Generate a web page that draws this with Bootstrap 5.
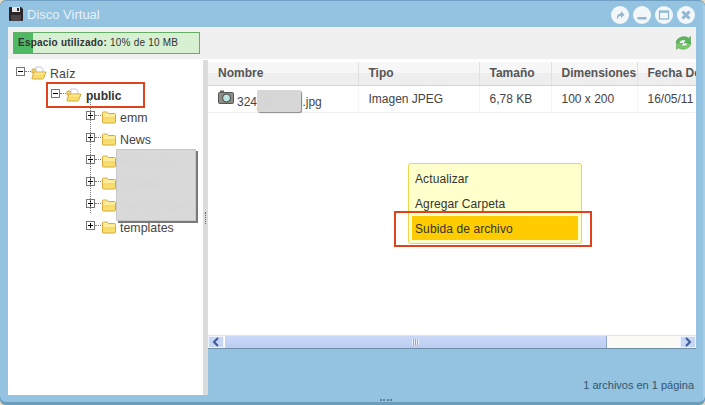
<!DOCTYPE html>
<html lang="es">
<head>
<meta charset="utf-8">
<title>Disco Virtual</title>
<link rel="stylesheet" href="https://cdn.jsdelivr.net/npm/bootstrap@5.3.0/dist/css/bootstrap.min.css">
<style>
html,body{margin:0;width:705px;height:405px;overflow:hidden;background:#e3dccb}
body{font-family:"Liberation Sans",Arial,sans-serif;font-size:12px;color:#444;line-height:1}
.win-frame{position:relative;width:705px;height:405px;background:#93c3e1;border-radius:6px;box-shadow:inset 0 1px 0 #6f9fc2,inset 0 -3px 0 #6b9dbd,inset -2px 0 0 #a9cfe6}
.title-bar{height:27px;padding:0 8px}
.title-text{color:#e6f1f9;font-size:13px;margin-left:3px;margin-top:1px}
.win-btn{width:18px;height:18px;background:#f4f7f9;border-radius:50%;display:block}
.win-btns{margin-right:2px;margin-top:2px;gap:4px}
.tool-bar{height:33px;margin:0 9px 0 8px;background:#f0f0f0;border-bottom:1px solid #fff;padding:0 4px 0 5px}
.quota{width:187px;height:22px;background:#d7f0d1;border:1px solid #63ad67;border-radius:0;font-size:10px;position:relative;margin-top:-1px}
.quota .progress-bar{background:#4fb862;width:19px}
.quota-label{position:absolute;left:4px;top:5px;color:#333;letter-spacing:.22px;white-space:nowrap}
.main-row{height:335px;margin:0 9px 0 8px}
.tree-pane{width:195px;background:#fff;padding-top:3px;position:relative}
.tree-list{list-style:none;margin:0;padding:0}
.tree-row{height:22px;font-size:12.4px;color:#444;white-space:nowrap}
.lvl-0{padding-left:8px}.lvl-1{padding-left:43px}.lvl-2{padding-left:78px}
.tree-box{width:9px;height:9px;flex:none;margin-top:-6px}
.tree-dash{width:6px;height:0;border-top:1px dotted #777;flex:none;margin-top:-6px}
.tree-ico{width:16px;height:14px;flex:none;margin-top:-3px}
.tree-name{margin-left:3px;margin-top:1px}
.is-strong{font-weight:700;font-size:12px;color:#333;margin-left:4px;margin-top:-1px}
.kid-list{position:relative}
.kid-list::before{content:"";position:absolute;left:82px;top:-8px;height:114px;border-left:1px dotted #777}
.split-bar{width:5px;background:#dcdcdc;position:relative}
.split-dots{position:absolute;left:2px;top:152px;width:1px;height:12px;border-left:1px dotted #667}
.right-col{min-width:0;width:488px}
.grid-zone{height:275px;background:#fff;overflow:hidden;padding-top:2px}
.grid-table{table-layout:fixed;width:508px;margin:0;border-collapse:collapse;--bs-table-bg:transparent}
.col-a{width:150px}.col-b{width:121px}.col-c{width:72px}.col-d{width:86px}.col-e{width:79px}
.grid-table th{height:23px;padding:0 0 0 10px;background:linear-gradient(#f7f7f7 50%,#eeeeee 50%);border-bottom:1px solid #d4d4d4;border-right:1px solid #e0e0e0;font-size:12px;color:#555;vertical-align:middle;white-space:nowrap;overflow:hidden}
.grid-table td{height:27px;padding:1px 0 0 10px;border-bottom:1px solid #f1f1f1;border-right:1px solid #f6f6f6;font-size:12px;color:#444;vertical-align:middle;white-space:nowrap;overflow:visible}
.cam-ico{width:16px;height:14px;vertical-align:2px;margin-right:3px}
.h-scroll{height:14px;background:#fbfaf4;border-bottom:1px solid #6f8fa8;border-top:1px solid #dfe3ea}
.sc-btn{width:16px;background:#c7d6f5;flex:none;box-shadow:inset 0 0 0 1px #eef3fd}
.sc-thumb{width:383px;background:linear-gradient(#cad8f8,#bccdf2);border-right:1px solid #8ea4c9;box-shadow:inset 1px 0 0 #fff}
.grip-lines{width:7px;height:6px;background:repeating-linear-gradient(90deg,#eef3ff 0 1px,#93a6ca 1px 2px)}
.foot-bar{height:46px;padding:0 2px 4px 0;color:#33556e;font-size:11px}
.bottom-grip{width:12px;height:0;border-top:2px dotted #5f7f97;position:absolute;left:380px;top:399px}
.corner-grip{position:absolute;left:697px;top:395px;width:5px;height:5px;background:radial-gradient(#5e86a5 35%,transparent 40%) 0 0/2px 2px}
.mark-box{position:absolute;border:2px solid #e0431c;pointer-events:none}
.mark-tree{left:46px;top:82px;width:99px;height:26px}
.mark-menu{left:394px;top:211px;width:198px;height:36px}
.mask-a{position:absolute;left:116px;top:149px;width:80px;height:72px;background:#d9d9d9;opacity:.985;box-shadow:2px 2px 0 #777;border:1px solid #c8c8c8}
.mask-b{position:absolute;left:257px;top:90px;width:44px;height:22px;background:#d7d7d7;opacity:.98;box-shadow:1px 1px 1px #888;border-radius:2px}
.ctx-menu{position:absolute;left:408px;top:163px;width:174px;height:81px;background:#ffffcb;border:1px solid #f0d34f;border-radius:3px;padding:3px}
.ctx-menu .list-group-item{background:transparent;border:0;padding:0 0 0 3px;height:24px;line-height:24px;font-size:12px;letter-spacing:.1px;color:#333;border-radius:0;margin-bottom:1px}
.ctx-menu .list-group-item.active{background:#ffcc00;color:#333;line-height:26px}
</style>
</head>
<body>
<svg width="0" height="0" class="position-absolute">
<defs>
<linearGradient id="fg" x1="0" y1="0" x2="0" y2="1"><stop offset="0" stop-color="#fff6b0"/><stop offset=".5" stop-color="#f8da62"/><stop offset="1" stop-color="#f6e27c"/></linearGradient>
<symbol id="plus-box" viewBox="0 0 9 9"><rect x=".5" y=".5" width="8" height="8" fill="#fff" stroke="#777"/><path d="M2 4.5h5M4.5 2v5" stroke="#000"/></symbol>
<symbol id="minus-box" viewBox="0 0 9 9"><rect x=".5" y=".5" width="8" height="8" fill="#fff" stroke="#777"/><path d="M2 4.5h5" stroke="#000"/></symbol>
<symbol id="f-closed" viewBox="0 0 16 14"><path d="M1.500 4V3q0-1 1-1h3.500l1.500 1.500h6q1 0 1 1V12q0 1-1 1h-11q-1 0-1-1z" fill="url(#fg)" stroke="#d8a93a"/><path d="M2 6h12" stroke="#fff9cf"/></symbol>
<symbol id="f-open" viewBox="0 0 16 14"><path d="M1 4q0-1 1-1h2l1 1h5v3H1z" fill="#f0d36c" stroke="#d8a93a"/><path d="M5 1h5l2 2v4H5z" fill="#fff" stroke="#b9b9c9" stroke-width=".8"/><path d="M1 12l2-6h12l-2.500 6.500q-.2.500-1 .500h-10q-1 0-.500-1z" fill="url(#fg)" stroke="#d8a93a"/></symbol>
</defs>
</svg>
<div class="win-frame">
  <header class="title-bar d-flex align-items-center">
    <svg width="16" height="16" viewBox="0 0 16 16"><path d="M1 2q0-1 1-1h11l2 2v11q0 1-1 1H2q-1 0-1-1z" fill="#2b2528"/><rect x="4" y="1" width="8" height="5" fill="#e8e8e8"/><rect x="9" y="2" width="2" height="3" fill="#2b2528"/><rect x="3" y="9" width="10" height="6" fill="#4a4448"/></svg>
    <span class="title-text">Disco Virtual</span>
    <div class="win-btns d-flex ms-auto">
      <span class="win-btn"><svg width="18" height="18" viewBox="0 0 18 18"><path d="M6.500 13.500c-1.500-3.500.5-6 3.500-6V5l3.500 3.700L10 12V9.800c-2 0-3 1.500-3.500 3.700z" fill="#8fb7d2"/></svg></span>
      <span class="win-btn"><svg width="18" height="18" viewBox="0 0 18 18"><rect x="4.500" y="11" width="9" height="2.500" fill="#8fb7d2"/></svg></span>
      <span class="win-btn"><svg width="18" height="18" viewBox="0 0 18 18"><rect x="4.500" y="5" width="9" height="8" fill="none" stroke="#8fb7d2" stroke-width="1.300"/><path d="M4.500 6h9" stroke="#8fb7d2" stroke-width="1.600"/></svg></span>
      <span class="win-btn"><svg width="18" height="18" viewBox="0 0 18 18"><path d="M5.500 5.500l7 7M12.500 5.500l-7 7" stroke="#8fb7d2" stroke-width="3"/></svg></span>
    </div>
  </header>
  <div class="tool-bar d-flex align-items-center justify-content-between">
    <div class="quota progress">
      <div class="progress-bar" role="progressbar"></div>
      <span class="quota-label"><b>Espacio utilizado:</b> 10% de 10 MB</span>
    </div>
    <svg width="17" height="16" viewBox="0 0 17 16"><path d="M1 7.500C2 2.500 9 0 13.500 3.200L15.500 1.500V8H9l2.200-2.200C8.500 3.800 5 4.800 4 8z" fill="#5cb85c" stroke="#3f8f3f" stroke-width=".5"/><path d="M16 8.500c-1 5-8 7.500-12.500 4.300L1.500 14.500V8.500H8L5.800 10.200C8.500 12.200 12 11.200 13 8z" fill="#7ccc6c" stroke="#3f8f3f" stroke-width=".5"/></svg>
  </div>
  <div class="main-row d-flex">
    <nav class="tree-pane">
      <ul class="tree-list">
        <li class="tree-row lvl-0 d-flex align-items-center"><svg class="tree-box"><use href="#minus-box"/></svg><span class="tree-dash"></span><svg class="tree-ico"><use href="#f-open"/></svg><span class="tree-name">Raíz</span></li>
        <li class="tree-row lvl-1 d-flex align-items-center"><svg class="tree-box"><use href="#minus-box"/></svg><span class="tree-dash"></span><svg class="tree-ico"><use href="#f-open"/></svg><span class="tree-name is-strong">public</span></li>
        <li>
          <ul class="tree-list kid-list">
            <li class="tree-row lvl-2 d-flex align-items-center"><svg class="tree-box"><use href="#plus-box"/></svg><span class="tree-dash"></span><svg class="tree-ico"><use href="#f-closed"/></svg><span class="tree-name">emm</span></li>
            <li class="tree-row lvl-2 d-flex align-items-center"><svg class="tree-box"><use href="#plus-box"/></svg><span class="tree-dash"></span><svg class="tree-ico"><use href="#f-closed"/></svg><span class="tree-name">News</span></li>
            <li class="tree-row lvl-2 d-flex align-items-center"><svg class="tree-box"><use href="#plus-box"/></svg><span class="tree-dash"></span><svg class="tree-ico"><use href="#f-closed"/></svg><span class="tree-name">Patronato</span></li>
            <li class="tree-row lvl-2 d-flex align-items-center"><svg class="tree-box"><use href="#plus-box"/></svg><span class="tree-dash"></span><svg class="tree-ico"><use href="#f-closed"/></svg><span class="tree-name">Prueba</span></li>
            <li class="tree-row lvl-2 d-flex align-items-center"><svg class="tree-box"><use href="#plus-box"/></svg><span class="tree-dash"></span><svg class="tree-ico"><use href="#f-closed"/></svg><span class="tree-name">Red Solidaria</span></li>
            <li class="tree-row lvl-2 d-flex align-items-center"><svg class="tree-box"><use href="#plus-box"/></svg><span class="tree-dash"></span><svg class="tree-ico"><use href="#f-closed"/></svg><span class="tree-name">templates</span></li>
          </ul>
        </li>
      </ul>
    </nav>
    <div class="split-bar"><span class="split-dots"></span></div>
    <div class="right-col d-flex flex-column">
      <div class="grid-zone">
        <table class="table grid-table">
          <colgroup><col class="col-a"><col class="col-b"><col class="col-c"><col class="col-d"><col class="col-e"></colgroup>
          <thead><tr><th>Nombre</th><th>Tipo</th><th>Tamaño</th><th>Dimensiones</th><th>Fecha De</th></tr></thead>
          <tbody><tr>
            <td><svg class="cam-ico" viewBox="0 0 16 14"><rect x=".5" y="2.500" width="15" height="11" rx="1" fill="#8d8d85" stroke="#555"/><rect x="2" y=".5" width="4" height="2" fill="#666"/><circle cx="8.500" cy="8" r="4" fill="#bfe3e3" stroke="#444"/></svg>324_diana_l.jpg</td>
            <td>Imagen JPEG</td><td>6,78 KB</td><td>100 x 200</td><td>16/05/11</td>
          </tr></tbody>
        </table>
      </div>
      <div class="h-scroll d-flex">
        <span class="sc-btn d-flex align-items-center justify-content-center"><svg width="8" height="10" viewBox="0 0 8 10"><path d="M6 1L2 5l4 4" fill="none" stroke="#3d5a96" stroke-width="2"/></svg></span>
        <span class="sc-thumb d-flex align-items-center justify-content-center"><span class="grip-lines"></span></span>
        <span class="flex-grow-1"></span>
        <span class="sc-btn d-flex align-items-center justify-content-center"><svg width="8" height="10" viewBox="0 0 8 10"><path d="M2 1l4 4-4 4" fill="none" stroke="#3d5a96" stroke-width="2"/></svg></span>
      </div>
      <div class="foot-bar d-flex align-items-end justify-content-end">1 archivos en 1 página</div>
    </div>
  </div>
  <span class="bottom-grip"></span>
  <span class="corner-grip"></span>
  <div class="mask-a"></div>
  <div class="mask-b"></div>
  <div class="ctx-menu list-group">
    <a class="list-group-item">Actualizar</a>
    <a class="list-group-item">Agregar Carpeta</a>
    <a class="list-group-item active">Subida de archivo</a>
  </div>
  <div class="mark-box mark-tree"></div>
  <div class="mark-box mark-menu"></div>
</div>
<script src="https://cdn.jsdelivr.net/npm/bootstrap@5.3.0/dist/js/bootstrap.bundle.min.js"></script>
</body>
</html>
